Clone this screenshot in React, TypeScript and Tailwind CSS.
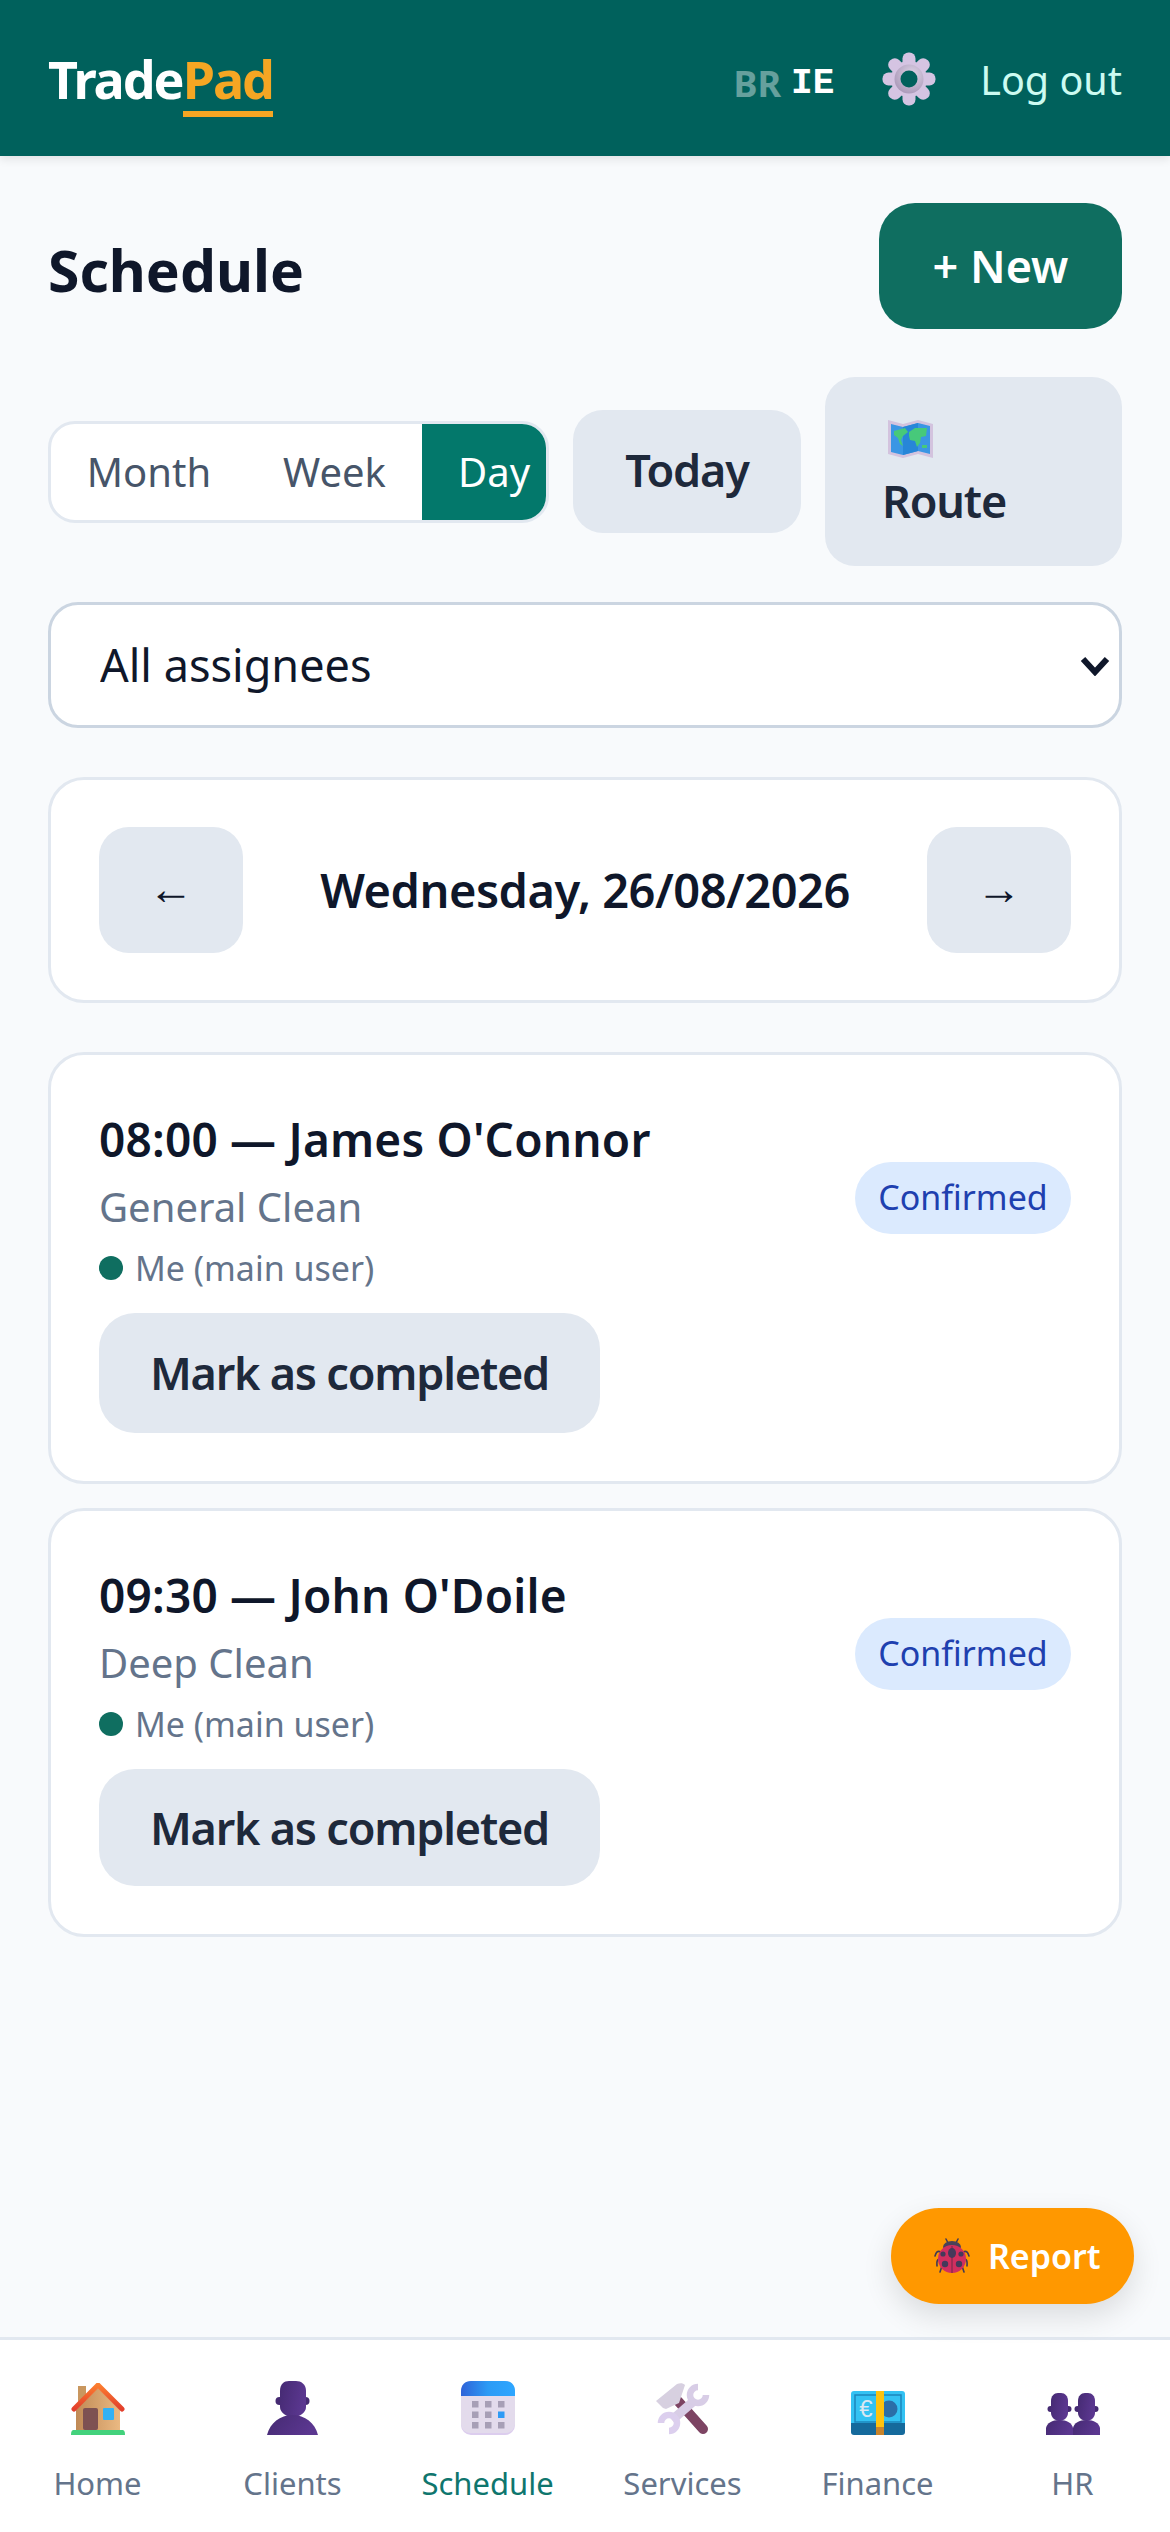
import React from "react";

function Gear() {
  const teeth = [0, 45, 90, 135, 180, 225, 270, 315];
  return (
    <svg width="54" height="54" viewBox="0 0 54 54">
      <defs>
        <radialGradient id="gearRing" cx="60%" cy="35%" r="70%">
          <stop offset="0%" stopColor="#e0d6e8" />
          <stop offset="100%" stopColor="#a998b8" />
        </radialGradient>
      </defs>
      {teeth.map((a) => (
        <rect key={a} x="20.5" y="0.5" width="13" height="22" rx="6" fill="#d5c4e2" transform={`rotate(${a} 27 27)`} />
      ))}
      <circle cx="27" cy="27" r="18" fill="#d5c4e2" />
      <circle cx="27" cy="27" r="14.5" fill="url(#gearRing)" />
      <circle cx="27" cy="27" r="8.5" fill="#00615c" />
    </svg>
  );
}

function MapIcon() {
  return (
    <svg width="45" height="40" viewBox="0 0 45 40" className="block">
      <path d="M0 1 L15 5 L30 1 L45 5 V39 L30 35 L15 39 L0 35Z" fill="#d3c3de" />
      <path d="M3 5 L15 8 L30 4 L42 7 V35 L30 32 L15 36 L3 33Z" fill="#3a96e4" />
      <path d="M15 8 L30 4 V32 L15 36Z" fill="#2786d8" />
      <path d="M6 12 L17 9 L20 13 L15 17 L13 21 L15 27 L12 25 L10 19 L6 16Z" fill="#47c97a" />
      <path d="M21 13 L27 9 L39 9 L38 17 L33 18 L32 24 L29 28 L27 22 L22 21 L21 17Z" fill="#47c97a" />
      <path d="M34 26 H39 V29 H34Z" fill="#47c97a" />
    </svg>
  );
}

function HomeIcon() {
  return (
    <svg width="54" height="52" viewBox="0 0 54 52">
      <defs>
        <linearGradient id="wall" x1="0" x2="1" y1="0" y2="0">
          <stop offset="0%" stopColor="#c08a56" />
          <stop offset="100%" stopColor="#eab982" />
        </linearGradient>
        <linearGradient id="roof" x1="0" x2="0" y1="0" y2="1">
          <stop offset="0%" stopColor="#fb7d2f" />
          <stop offset="100%" stopColor="#e23f2c" />
        </linearGradient>
      </defs>
      <rect x="7" y="3" width="8" height="20" fill="#c9975f" />
      <path d="M5 27 L27 5 L49 27 V48 H5Z" fill="url(#wall)" />
      <path d="M3 26 L27 2 L51 26" fill="none" stroke="url(#roof)" strokeWidth="5" strokeLinecap="round" strokeLinejoin="round" />
      <rect x="12" y="25" width="15" height="22" rx="2" fill="#7d5152" />
      <rect x="32" y="25" width="11" height="12" rx="1" fill="#31b1f5" />
      <path d="M0 52 C0 48 1 47 3 47 H51 C53 47 54 48 54 52Z" fill="#43d27c" />
    </svg>
  );
}

function Person({ id, w, h }: { id: string; w: number; h: number }) {
  return (
    <svg width={w} height={h} viewBox="0 0 51 54">
      <defs>
        <linearGradient id={id} x1="0" x2="1" y1="0" y2="0.3">
          <stop offset="0%" stopColor="#452a72" />
          <stop offset="100%" stopColor="#5b3790" />
        </linearGradient>
      </defs>
      <circle cx="12.5" cy="20" r="4" fill="#452a72" />
      <circle cx="38.5" cy="20" r="4" fill="#452a72" />
      <path d="M13 10 C13 3 17 0 22 0 H29 C34 0 39 3 39 10 V26 C39 32 32 36 26 36 C20 36 13 32 13 26Z" fill={`url(#${id})`} />
      <path d="M0 54 C3 42 13 34 25.5 34 C38 34 48 42 51 54Z" fill={`url(#${id})`} />
    </svg>
  );
}

function People() {
  return (
    <svg width="54" height="42" viewBox="0 0 54 42">
      <defs>
        <linearGradient id="hrg" x1="0" x2="1" y1="0" y2="0.3">
          <stop offset="0%" stopColor="#452a72" />
          <stop offset="100%" stopColor="#5b3790" />
        </linearGradient>
      </defs>
      {[0, 27].map((x) => (
        <g key={x} transform={`translate(${x} 0)`}>
          <circle cx="4.5" cy="16" r="3" fill="#452a72" />
          <circle cx="22.5" cy="16" r="3" fill="#452a72" />
          <path d="M5 8 C5 3 8 0 12 0 H15 C19 0 22 3 22 8 V20 C22 25 17 28 13.5 28 C10 28 5 25 5 20Z" fill="url(#hrg)" />
          <path d="M0 42 V35 C1 30 6 27 13.5 27 C21 27 26 30 27 35 V42Z" fill="url(#hrg)" />
        </g>
      ))}
    </svg>
  );
}

function CalendarIcon() {
  const cells = [0, 1, 2];
  return (
    <svg width="54" height="54" viewBox="0 0 54 54">
      <defs>
        <linearGradient id="calTop" x1="0" x2="1" y1="0" y2="0">
          <stop offset="0%" stopColor="#2f63d8" />
          <stop offset="50%" stopColor="#2c9bf5" />
          <stop offset="100%" stopColor="#2ea6ff" />
        </linearGradient>
      </defs>
      <rect x="0" y="0" width="54" height="54" rx="10" fill="#dccdee" />
      <rect x="0" y="3" width="54" height="49" rx="9" fill="#e3dbec" />
      <path d="M0 15 V10 C0 4 4 0 10 0 H44 C50 0 54 4 54 10 V15Z" fill="url(#calTop)" />
      {cells.map((r) =>
        cells.map((c) => (
          <rect
            key={`${r}-${c}`}
            x={11 + c * 13}
            y={20 + r * 10.5}
            width="6.5"
            height="6.5"
            fill={r === 1 && c === 2 ? "#2e9bf5" : "#a79fb6"}
          />
        ))
      )}
    </svg>
  );
}

function ToolsIcon() {
  return (
    <svg width="54" height="52" viewBox="0 0 54 52">
      <path d="M22 18 L47 46" stroke="#7d4463" strokeWidth="10" strokeLinecap="round" />
      <path d="M0 18 L21 1 C24 0 27 0 29 2 L23 20 L10 26 L7 25Z" fill="#d7d0e0" />
      <path d="M16 37 L39 17" stroke="#d8cde6" strokeWidth="9" />
      <path d="M42 4 A8 8 0 1 0 50 12" fill="none" stroke="#d8cde6" strokeWidth="6.5" />
      <path d="M5 40 A8 8 0 1 1 13 48" fill="none" stroke="#dccfee" strokeWidth="6.5" />
    </svg>
  );
}

function MoneyIcon() {
  return (
    <svg width="54" height="44" viewBox="0 0 54 44">
      <rect x="0" y="0" width="54" height="36" rx="3" fill="#33c2f3" />
      <path d="M0 32 H54 V41 C54 43 53 44 51 44 H3 C1 44 0 43 0 41Z" fill="#156a9c" />
      <rect x="4" y="4" width="46" height="27" fill="none" stroke="#1d86bd" strokeWidth="1.5" />
      <circle cx="38" cy="18" r="8.5" fill="#2b6ea8" />
      <text x="15" y="26" textAnchor="middle" fontSize="24" fill="#dbe8f2" fontFamily="'Liberation Sans', sans-serif">€</text>
      <rect x="25" y="0" width="8" height="36" fill="#fdc20e" />
      <rect x="25" y="36" width="8" height="8" fill="#c8842c" />
    </svg>
  );
}

function BugIcon() {
  return (
    <svg width="36" height="36" viewBox="0 0 36 36">
      <g stroke="#3f3a55" strokeWidth="1.6" fill="none" strokeLinecap="round">
        <path d="M14 5 L12 1" />
        <path d="M22 5 L24 1" />
        <path d="M7 14 C3 12 2 15 1 18" />
        <path d="M29 14 C33 12 34 15 35 18" />
        <path d="M5 21 C2 22 3 25 3 28" />
        <path d="M31 21 C34 22 33 25 33 28" />
        <path d="M8 28 L6 34" />
        <path d="M28 28 L30 34" />
      </g>
      <ellipse cx="18" cy="9" rx="9" ry="6" fill="#4a4258" />
      <ellipse cx="18" cy="21" rx="14" ry="14" fill="#d12f5f" />
      <path d="M18 8 V35" stroke="#6c2a4a" strokeWidth="1" />
      <ellipse cx="18" cy="15" rx="4" ry="5" fill="#45395a" />
      <circle cx="9" cy="16" r="2.6" fill="#45395a" />
      <circle cx="27" cy="16" r="2.6" fill="#45395a" />
      <circle cx="11" cy="26" r="3.2" fill="#45395a" />
      <circle cx="25" cy="26" r="3.2" fill="#45395a" />
    </svg>
  );
}

function Card({ title, service, action, short }: { title: string; service: string; action: string; short?: boolean }) {
  return (
    <div className="rounded-[36px] border-[3px] border-[#e2e8f0] bg-white p-[48px]">
      <div className="flex items-center justify-between">
        <div>
          <div className="text-[46px] leading-[72px] font-semibold tracking-[0.2px] text-[#0f172a]">{title}</div>
          <div className="text-[40px] leading-[63px] text-[#64748b]">{service}</div>
          <div className="mt-[3px] flex h-[54px] items-center gap-[12px] text-[34px] text-[#64748b]">
            <span className="h-[24px] w-[24px] rounded-full bg-[#0f6e60]" />
            <span>Me (main user)</span>
          </div>
        </div>
        <span className="mb-[3px] flex h-[72px] w-[216px] items-center justify-center rounded-full bg-[#dbeafe] text-[34px] text-[#1e40af]">
          Confirmed
        </span>
      </div>
      <button
        className={`mt-[18px] block w-[501px] rounded-[36px] bg-[#e2e8f0] text-[45px] font-semibold tracking-[-1.2px] text-[#1e293b] ${short ? "h-[117px]" : "h-[120px]"}`}
      >
        {action}
      </button>
    </div>
  );
}

function NavItem({ label, active, children }: { label: string; active?: boolean; children: React.ReactNode }) {
  return (
    <div className="flex flex-col items-center">
      <div className="flex h-[54px] items-end">{children}</div>
      <span className={`mt-[23px] text-[31px] leading-[50px] ${active ? "text-[#0f766e]" : "text-[#64748b]"}`}>{label}</span>
    </div>
  );
}

export default function App() {
  return (
    <div className="relative flex h-[2532px] w-[1170px] flex-col overflow-hidden bg-[#f8fafc] font-['Noto_Sans',sans-serif]">
      <header className="z-10 flex h-[156px] items-center justify-between bg-[#00615c] px-[48px] shadow-[0_3px_9px_rgba(0,0,0,0.1)]">
        <div className="flex text-[52px] font-bold tracking-[-2px] text-white">
          <span className="pt-[8px] leading-[64px]">Trade</span>
          <span className="border-b-[6px] border-[#f5a623] pt-[8px] leading-[64px] text-[#f5a623]">Pad</span>
        </div>
        <div className="flex items-center">
          <span className="mt-[12px] text-[36px] font-bold text-white opacity-40">BR</span>
          <span className="mt-[12px] ml-[10px] font-['Liberation_Mono',monospace] text-[36px] font-bold text-white">IE</span>
          <span className="mt-[2px] ml-[48px]"><Gear /></span>
          <span className="mt-[6px] ml-[44px] text-[39.5px] text-[#ccfbf1]">Log out</span>
        </div>
      </header>

      <main className="flex flex-1 flex-col px-[48px]">
        <div className="mt-[47px] flex items-center justify-between">
          <h1 className="pt-[10px] text-[57px] font-bold text-[#0f172a]">Schedule</h1>
          <button className="h-[126px] w-[243px] rounded-[36px] bg-[#0f6e60] text-[45px] font-semibold text-white">+ New</button>
        </div>

        <div className="mt-[48px] flex items-center gap-[24px]">
          <div className="flex h-[102px] w-[501px] overflow-hidden rounded-[27px] border-[3px] border-[#e2e8f0] bg-white text-[40px] text-[#475569]">
            <span className="flex w-[196px] items-center justify-center">Month</span>
            <span className="flex w-[175px] items-center justify-center">Week</span>
            <span className="flex flex-1 items-center bg-[#03786b] pl-[36px] text-white">Day</span>
          </div>
          <button className="h-[123px] w-[228px] rounded-[30px] bg-[#e2e8f0] pb-[4px] text-[45px] font-semibold tracking-[-1.2px] text-[#1e293b]">Today</button>
          <button className="flex h-[189px] w-[297px] flex-col items-start rounded-[30px] bg-[#e2e8f0] pt-[42px] pl-[57px] text-[45px] font-semibold tracking-[-1.2px] text-[#1e293b]">
            <span className="ml-[6px]"><MapIcon /></span>
            <span className="mt-[6px] leading-[72px]">Route</span>
          </button>
        </div>

        <div className="relative mt-[36px]">
          <select className="h-[126px] w-full appearance-none rounded-[30px] border-[3px] border-[#cbd5e1] bg-white pl-[49px] text-[45px] text-[#0f172a]">
            <option>All assignees</option>
          </select>
          <svg className="pointer-events-none absolute top-[54px] right-[12px]" width="30" height="20" viewBox="0 0 30 20">
            <path d="M3 3 L15 16 L27 3" fill="none" stroke="#0f172a" strokeWidth="6" />
          </svg>
        </div>

        <div className="mt-[49px] flex h-[226px] items-center justify-between rounded-[36px] border-[3px] border-[#e2e8f0] bg-white px-[48px]">
          <button className="h-[126px] w-[144px] rounded-[30px] bg-[#e2e8f0] pb-[6px] text-[45px] text-[#0f172a]">←</button>
          <span className="text-[47px] font-semibold tracking-[-0.5px] text-[#0f172a]">Wednesday, 26/08/2026</span>
          <button className="h-[126px] w-[144px] rounded-[30px] bg-[#e2e8f0] pb-[6px] text-[45px] text-[#0f172a]">→</button>
        </div>

        <div className="mt-[49px] flex flex-col gap-[24px]">
          <Card title="08:00 — James O'Connor" service="General Clean" action="Mark as completed" />
          <Card title="09:30 — John O'Doile" service="Deep Clean" action="Mark as completed" short />
        </div>
      </main>

      <button className="absolute top-[2208px] left-[891px] flex h-[96px] w-[243px] items-center rounded-full bg-[#ff9800] pl-[43px] text-[34px] font-semibold text-white shadow-[0_12px_30px_rgba(0,0,0,0.12)]">
        <BugIcon />
        <span className="ml-[18px]">Report</span>
      </button>

      <nav className="grid h-[195px] grid-cols-6 border-t-[3px] border-[#e2e8f0] bg-white pt-[41px]">
        <NavItem label="Home"><HomeIcon /></NavItem>
        <NavItem label="Clients"><Person id="p1" w={51} h={54} /></NavItem>
        <NavItem label="Schedule" active><CalendarIcon /></NavItem>
        <NavItem label="Services"><ToolsIcon /></NavItem>
        <NavItem label="Finance"><MoneyIcon /></NavItem>
        <NavItem label="HR"><People /></NavItem>
      </nav>
    </div>
  );
}
